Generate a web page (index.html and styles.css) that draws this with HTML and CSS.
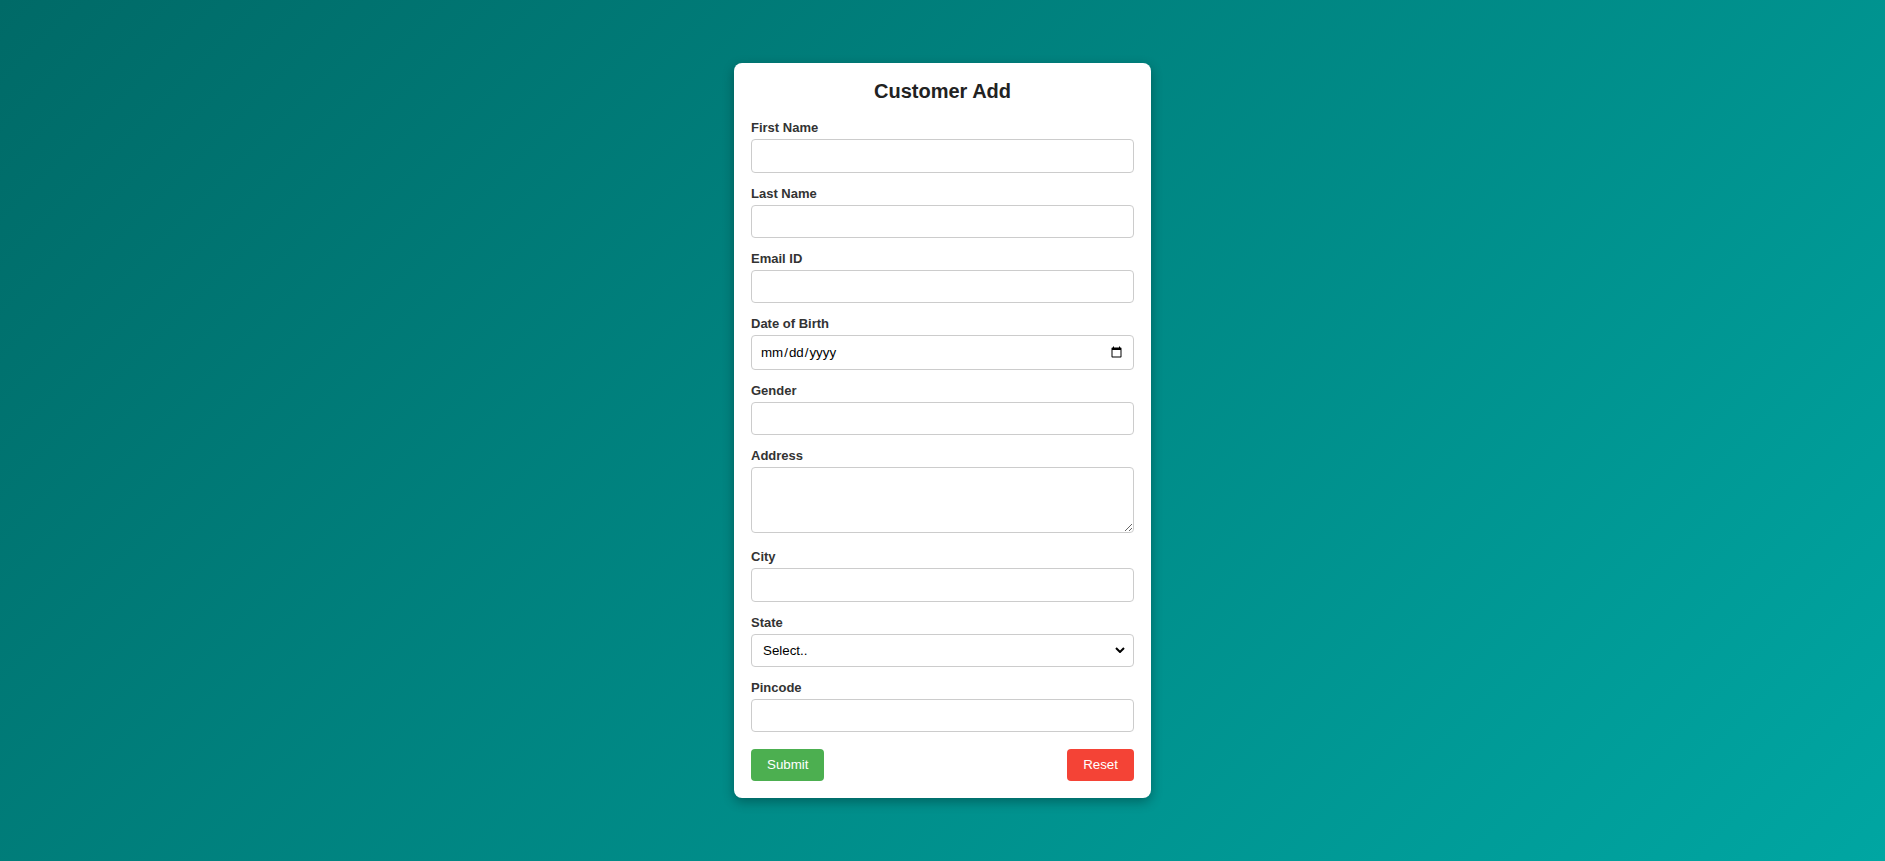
FILE: index.html
```html
<!DOCTYPE html>
<html lang="en">
<head>
  <meta charset="UTF-8">
  <title>Customer Add</title>
  <link rel="stylesheet" href="styles.css">
</head>
<body>
  <div class="container">
    <form class="card">
      <h2>Customer Add</h2>

      <label for="firstName">First Name</label>
      <input type="text" id="firstName">

      <label for="lastName">Last Name</label>
      <input type="text" id="lastName">

      <label for="email">Email ID</label>
      <input type="email" id="email">

      <label for="dob">Date of Birth</label>
      <input type="date" id="dob" class="date">

      <label for="gender">Gender</label>
      <input type="text" id="gender">

      <label for="address">Address</label>
      <textarea id="address"></textarea>

      <label for="city">City</label>
      <input type="text" id="city">

      <label for="state">State</label>
      <select id="state">
        <option>Select..</option>
        <option>Karnataka</option>
        <option>Kerala</option>
        <option>Maharashtra</option>
        <option>Tamil Nadu</option>
      </select>

      <label for="pincode">Pincode</label>
      <input type="text" id="pincode">

      <div class="buttons">
        <button type="submit" class="submit">Submit</button>
        <button type="reset" class="reset">Reset</button>
      </div>
    </form>
  </div>
</body>
</html>
```

FILE: styles.css
```css
html, body {
  margin: 0;
  padding: 0;
}
body {
  font-family: "Liberation Sans", Arial, sans-serif;
  background: linear-gradient(135deg, #006a67 0%, #00a6a2 100%);
  min-height: 100vh;
}
.container {
  min-height: 100vh;
  display: flex;
  align-items: center;
  justify-content: center;
}
.card {
  width: 417px;
  box-sizing: border-box;
  padding: 17px;
  background: white;
  border-radius: 8px;
  box-shadow: 0 4px 12px rgba(0,0,0,0.3);
}
.card h2 {
  margin: 0 0 17px;
  text-align: center;
  font-size: 20px;
  line-height: 23px;
  font-weight: 700;
  color: #222;
}
.card label {
  display: block;
  font-size: 13px;
  line-height: 15px;
  font-weight: 700;
  color: #333;
  margin-bottom: 4px;
}
.card input,
.card select,
.card textarea {
  display: block;
  width: 100%;
  box-sizing: border-box;
  height: 33.3px;
  margin: 0 0 13px;
  padding: 8px;
  border: 1px solid #ccc;
  border-radius: 4px;
  background-color: white;
  font-family: "Liberation Sans", Arial, sans-serif;
  font-size: 13.33px;
  color: #000;
}
.card input.date {
  height: 34.4px;
}
.card select {
  height: 33px;
  padding: 0 30px 0 11px;
  appearance: none;
  -webkit-appearance: none;
  background-image: url("data:image/svg+xml,%3Csvg xmlns='http://www.w3.org/2000/svg' width='10' height='6' viewBox='0 0 10 6'%3E%3Cpath d='M1 1l4 4 4-4' fill='none' stroke='%23000' stroke-width='2'/%3E%3C/svg%3E");
  background-repeat: no-repeat;
  background-position: right 8px center;
  background-size: 10px 6px;
}
.card textarea {
  height: 66.4px;
  margin-bottom: 16px;
  resize: vertical;
}
.buttons {
  display: flex;
  justify-content: space-between;
  margin-top: 17px;
}
.buttons button {
  border: 0;
  border-radius: 4px;
  padding: 8px 16px;
  color: white;
  font-family: "Liberation Sans", Arial, sans-serif;
  font-size: 13.33px;
  line-height: 15.5px;
  cursor: pointer;
}
.submit {
  background: #4caf50;
}
.reset {
  background: #f44336;
}
```
